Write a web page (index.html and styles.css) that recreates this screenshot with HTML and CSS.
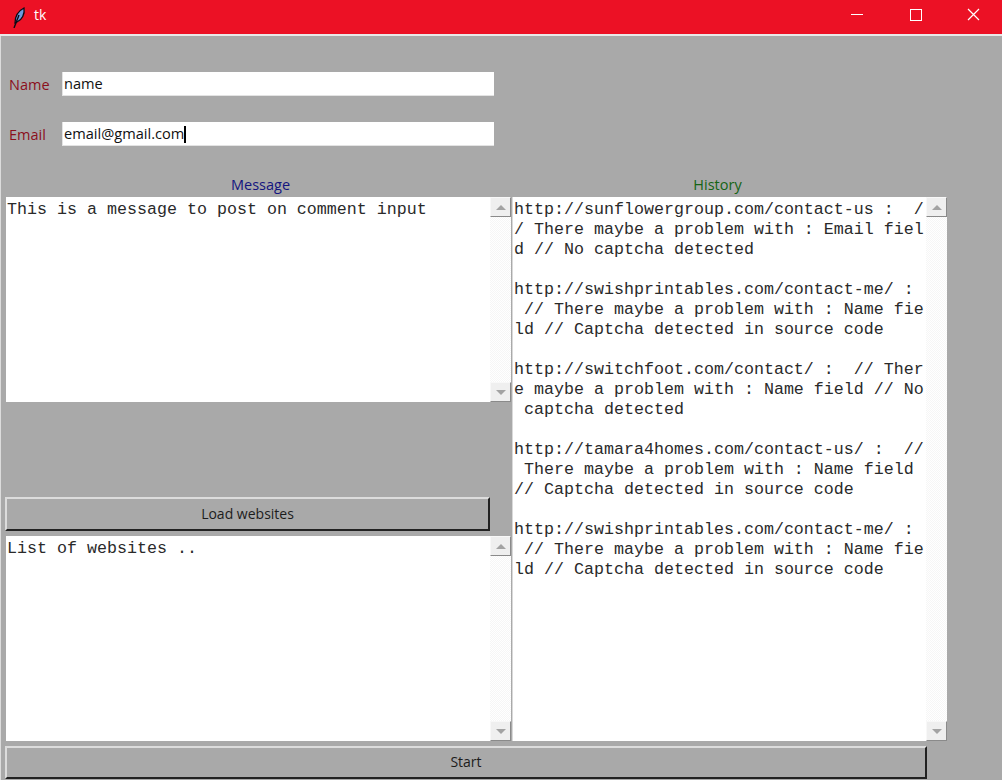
FILE: index.html
```html
<!DOCTYPE html>
<html lang="en">
<head>
    <meta charset="UTF-8">
    <meta name="viewport" content="width=device-width, initial-scale=1.0">
    <title>tk</title>
    <link rel="stylesheet" href="styles.css">
</head>
<body>
    <div class="titlebar">
        <svg class="feather" width="16" height="24" viewBox="0 0 16 24">
            <path d="M4 19 C4 13 7 7 13 4 C14 10 11 16 6 18 Z" fill="#6c9be0" stroke="#0b0b14" stroke-width="1.3"/>
            <path d="M3 24 L8 11" stroke="#0b0b14" stroke-width="1.4" fill="none"/>
        </svg>
        <span class="title">tk</span>
        <div class="controls">
            <svg class="control" width="46" height="34" viewBox="0 0 46 34"><path d="M11 14.5 H23" stroke="#fff"/></svg>
            <svg class="control" width="60" height="34" viewBox="0 0 60 34"><rect x="24.5" y="9.5" width="11" height="11" fill="none" stroke="#fff"/></svg>
            <svg class="control" width="56" height="34" viewBox="0 0 56 34"><path d="M22 9 L33 20 M33 9 L22 20" stroke="#fff" stroke-width="1.2"/></svg>
        </div>
    </div>

    <div class="window">
        <div class="field">
            <label class="field_label">Name</label>
            <div class="entry">name</div>
        </div>
        <div class="field">
            <label class="field_label">Email</label>
            <div class="entry">email@gmail.com<span class="caret"></span></div>
        </div>

        <div class="panels">
            <div class="col_left">
                <div class="heading heading_blue">Message</div>
                <div class="textbox textbox_short">
                    <pre class="text">This is a message to post on comment input</pre>
                    <div class="scrollbar">
                        <div class="arrow"><i class="tri_up"></i></div>
                        <div class="arrow"><i class="tri_down"></i></div>
                    </div>
                </div>
                <button class="btn btn_load">Load websites</button>
                <div class="textbox textbox_short">
                    <pre class="text">List of websites ..</pre>
                    <div class="scrollbar">
                        <div class="arrow"><i class="tri_up"></i></div>
                        <div class="arrow"><i class="tri_down"></i></div>
                    </div>
                </div>
            </div>
            <div class="col_right">
                <div class="heading heading_green">History</div>
                <div class="textbox textbox_tall">
                    <pre class="text">http://sunflowergroup.com/contact-us :  /
/ There maybe a problem with : Email fiel
d // No captcha detected

http://swishprintables.com/contact-me/ :
 // There maybe a problem with : Name fie
ld // Captcha detected in source code

http://switchfoot.com/contact/ :  // Ther
e maybe a problem with : Name field // No
 captcha detected

http://tamara4homes.com/contact-us/ :  //
 There maybe a problem with : Name field 
// Captcha detected in source code

http://swishprintables.com/contact-me/ :
 // There maybe a problem with : Name fie
ld // Captcha detected in source code</pre>
                    <div class="scrollbar">
                        <div class="arrow"><i class="tri_up"></i></div>
                        <div class="arrow"><i class="tri_down"></i></div>
                    </div>
                </div>
            </div>
        </div>

        <button class="btn btn_start">Start</button>
    </div>
</body>
</html>
```
FILE: styles.css
```css
* {
    margin: 0;
    padding: 0;
    box-sizing: border-box;
}

body {
    width: 1002px;
    height: 780px;
    overflow: hidden;
    background: #a9a9a9;
    font-family: "Open Sans", "Noto Sans", sans-serif;
    font-size: 14px;
}

/* title bar */
.titlebar {
    height: 36px;
    display: flex;
    align-items: flex-start;
    background: #ec1125;
    border-bottom: 2px solid #e9e9e9;
    color: #fff;
}

.feather {
    margin: 4px 0 0 11px;
}

.title {
    margin-left: 7px;
    line-height: 30px;
    font-size: 14px;
}

.controls {
    margin-left: auto;
    display: flex;
}

.control {
    display: block;
}

/* main window */
.window {
    height: 744px;
    padding: 36px 0 0 5px;
    border-left: 1px solid #dcdcdc;
}

.field {
    height: 24px;
    margin-bottom: 26px;
    display: flex;
    align-items: center;
}

.field_label {
    width: 56px;
    padding-left: 3px;
    color: #8b0f1c;
    font-size: 14.5px;
    line-height: 24px;
    position: relative;
    top: 1px;
}

.entry {
    width: 432px;
    height: 24px;
    background: #fff;
    border-left: 1px solid #e3e3e3;
    border-bottom: 1px solid #e3e3e3;
    padding-left: 1px;
    color: #111;
    font-size: 14.6px;
    line-height: 22px;
}

.caret {
    display: inline-block;
    width: 2px;
    height: 17px;
    background: #000;
    vertical-align: -4px;
}

.panels {
    display: flex;
    gap: 1px;
    margin-top: -1px;
}

.col_left {
    width: 505px;
}

.col_right {
    width: 435px;
}

.heading {
    height: 26px;
    line-height: 28px;
    text-align: center;
    font-size: 14.5px;
}

.heading_blue {
    color: #14147f;
    padding-left: 4px;
}

.heading_green {
    color: #146414;
    padding-right: 24px;
}

.textbox {
    display: flex;
    background: #fff;
}

.textbox_short {
    height: 205px;
}

.textbox_tall {
    height: 544px;
    border-left: 1px solid #d9d9d9;
}

.text {
    flex: 1;
    padding: 3px 0 0 1px;
    font-family: "Liberation Mono", monospace;
    font-size: 16.67px;
    line-height: 20px;
    color: #2a2a2a;
    overflow: hidden;
}

/* scrollbar */
.scrollbar {
    width: 21px;
    display: flex;
    flex-direction: column;
    justify-content: space-between;
    background: repeating-conic-gradient(#f6f6f6 0 25%, #fff 0 50%) 0 0 / 2px 2px;
}

.arrow {
    height: 20px;
    display: flex;
    align-items: center;
    justify-content: center;
    background: #efefef;
    border: 1px solid;
    border-color: #f8f8f8 #8a8a8a #8a8a8a #f8f8f8;
}

.tri_up,
.tri_down {
    width: 0;
    height: 0;
    border-left: 5px solid transparent;
    border-right: 5px solid transparent;
}

.tri_up {
    border-bottom: 5px solid #a3a3a3;
}

.tri_down {
    border-top: 5px solid #a3a3a3;
}

/* buttons */
.btn {
    display: block;
    background: #a9a9a9;
    border: 2px solid;
    border-color: #dcdcdc #222 #222 #dcdcdc;
    color: #1c1c1c;
    font-family: inherit;
    font-size: 14px;
    padding-bottom: 2px;
}

.btn_load {
    width: 485px;
    height: 34px;
    margin: 95px 0 5px -1px;
}

.btn_start {
    width: 922px;
    height: 33px;
    margin: 5px 0 0 -1px;
}
```
